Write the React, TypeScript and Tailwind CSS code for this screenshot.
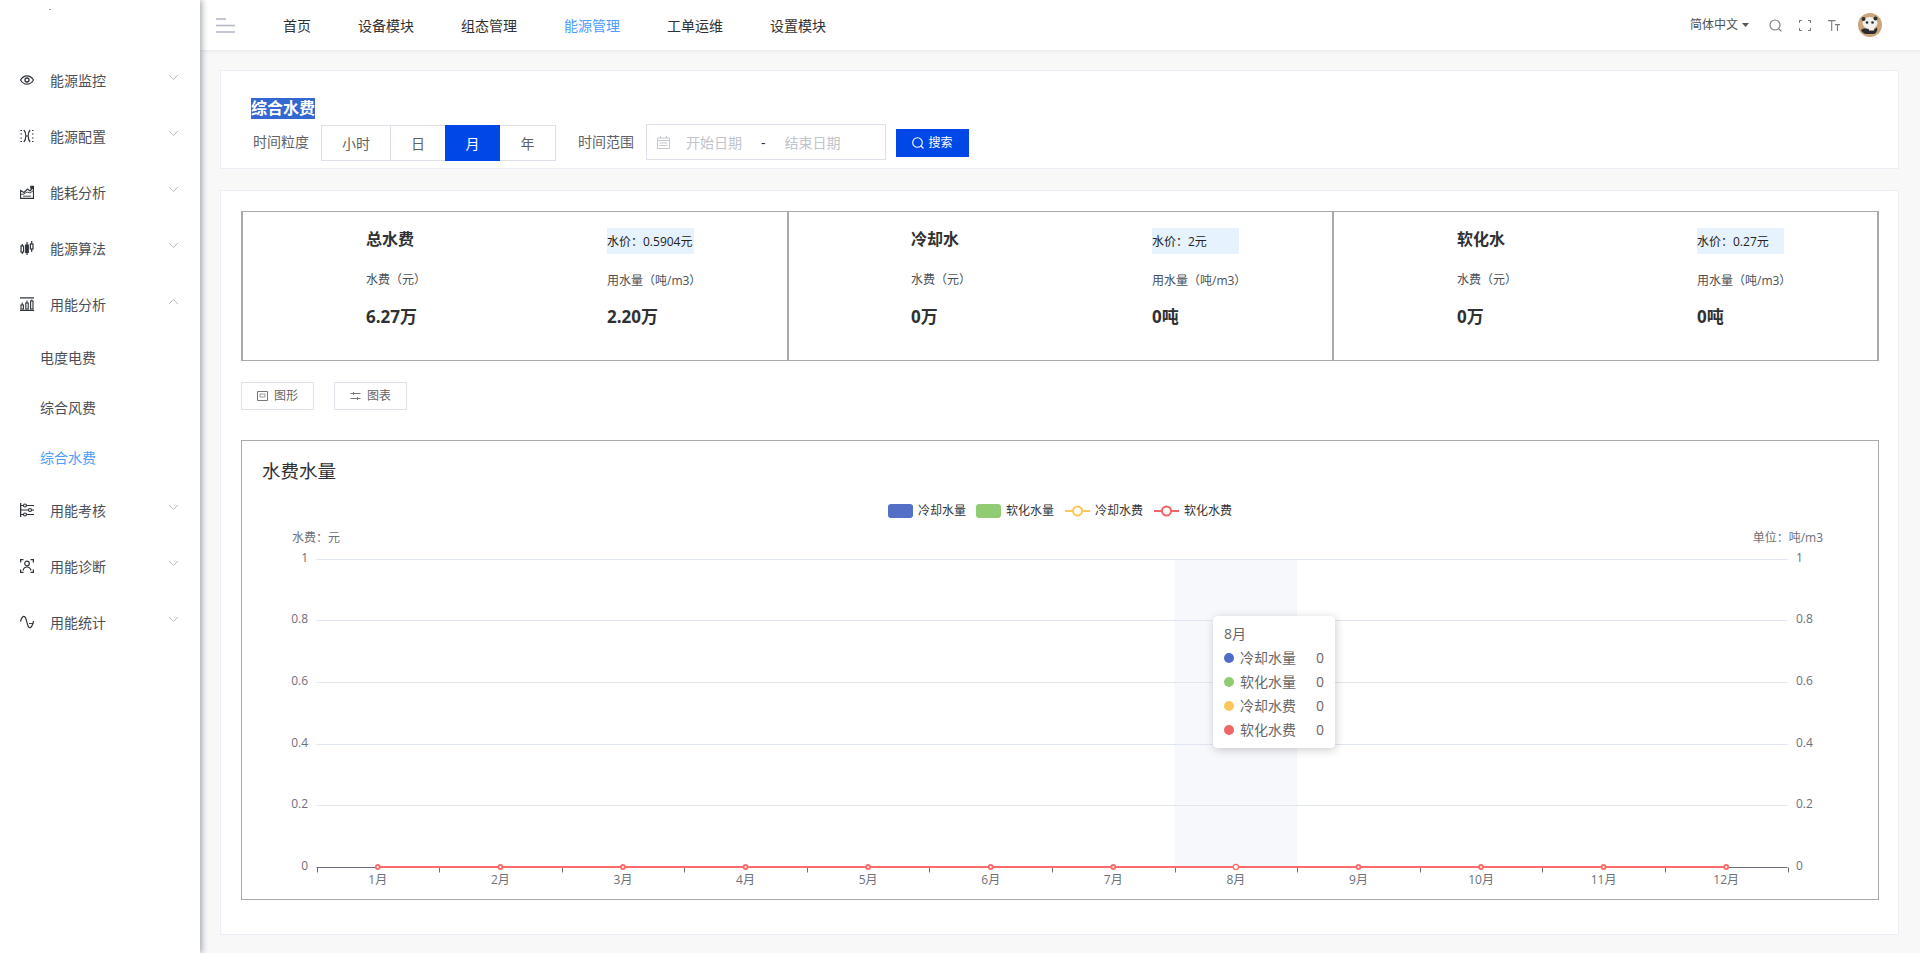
import React from "react";

const menuTop = [
  { t: "能源监控", i: "eye" },
  { t: "能源配置", i: "cfg" },
  { t: "能耗分析", i: "factory" },
  { t: "能源算法", i: "candle" },
];
const menuBottom = [
  { t: "用能考核", i: "sliders" },
  { t: "用能诊断", i: "scan" },
  { t: "用能统计", i: "wave" },
];

function MenuIcon({ name }: { name: string }) {
  const common = { width: 14, height: 14, viewBox: "0 0 14 14", fill: "none", stroke: "#2f343b", strokeWidth: 1.1 };
  switch (name) {
    case "eye":
      return (
        <svg {...common}>
          <path d="M0.5 7C2.2 4.2 4.400 2.800 7 2.800s4.800 1.400 6.500 4.200C11.800 9.800 9.600 11.200 7 11.200S2.200 9.800.5 7z" strokeWidth={1.2} />
          <circle cx="7" cy="7" r="2" strokeWidth={1.3} />
        </svg>
      );
    case "cfg":
      return (
        <svg {...common}>
          <path d="M3.800 1C6.500 3.500 6.500 10.500 3.800 13M10.200 1C7.500 3.500 7.500 10.500 10.200 13M5.500 7h3" strokeWidth={1.2} />
          <path d="M0.500 1.500h1.500M0.500 5h1.500M0.500 9h1.500M0.500 12.500h1.500M12 1.500h1.500M12 5h1.500M12 9h1.500M12 12.500h1.500" strokeWidth={1.2} />
        </svg>
      );
    case "factory":
      return (
        <svg {...common}>
          <path d="M0.500 13.300V5.500L4 7.500 7.500 4l2.500 2 3.500-4v11.300z" strokeWidth={1.2} />
          <path d="M0.500 9.500L4 9l3-2 3 1 3.500-2.500M3 11.200h8" strokeWidth={0.9} />
          <path d="M10.500 1h3v2.500h-3z" fill="#2f343b" strokeWidth={0.6} />
        </svg>
      );
    case "candle":
      return (
        <svg {...common}>
          <rect x="1" y="5" width="2.600" height="6" strokeWidth={1.2} />
          <rect x="5.700" y="4" width="2.600" height="7.500" fill="#2f343b" />
          <rect x="10.400" y="3" width="2.600" height="5" strokeWidth={1.2} />
          <path d="M2.300 3v2M2.300 11v2M7 1v3M7 11.500V14M11.700 0v3M11.700 8v3" strokeWidth={1.2} />
        </svg>
      );
    case "bars":
      return (
        <svg {...common}>
          <path d="M0 .8h14M0 13.400h14" strokeWidth={1.3} />
          <rect x="1" y="8" width="2.400" height="4" strokeWidth={1.1} />
          <rect x="5.800" y="6" width="2.400" height="6" strokeWidth={1.1} />
          <rect x="10.600" y="4" width="2.400" height="8" strokeWidth={1.1} />
          <path d="M2.200 5.500v2.500M7 3.500V6M11.800 2.500V4" />
        </svg>
      );
    case "sliders":
      return (
        <svg {...common}>
          <path d="M0.600 0v14" strokeWidth={1.3} />
          <path d="M1 2.500h13M1 7h13M1 11.500h13" />
          <circle cx="5" cy="2.500" r="1.500" fill="#fff" strokeWidth={1.2} />
          <circle cx="10" cy="7" r="1.500" fill="#fff" strokeWidth={1.2} />
          <circle cx="5" cy="11.500" r="1.500" fill="#fff" strokeWidth={1.2} />
        </svg>
      );
    case "scan":
      return (
        <svg {...common}>
          <path d="M0.600 3.500V.6h2.900M10.500.6h2.900v2.900M13.400 10.500v2.900h-2.900M3.500 13.400H.6v-2.900" strokeWidth={1.3} />
          <circle cx="7" cy="4.500" r="2.300" strokeWidth={1.2} />
          <path d="M3 11.500C3.600 9 5 8 7 8s3.400 1 4 3.500" strokeWidth={1.2} />
        </svg>
      );
    default:
      return (
        <svg {...common}>
          <path d="M0.500 6.500C1.500 2 3.500 0.500 5 2c2 2 1.500 8 4 10.500 1.500 1 3.500-1 4.500-6.500" strokeWidth={1.2} />
          <path d="M9 8.500h4.500" strokeWidth={0.9} />
        </svg>
      );
  }
}

function Chevron({ up }: { up?: boolean }) {
  return (
    <svg width="11" height="7" viewBox="0 0 11 7" fill="none" stroke="#b5b9c2" strokeWidth="1" className="mb-[6px] ml-auto mr-[21px]">
      <path d={up ? "M1 6l4.500-4.500L10 6" : "M1 1l4.500 4.500L10 1"} />
    </svg>
  );
}

function MenuRow({ t, i, up }: { t: string; i: string; up?: boolean }) {
  return (
    <div className="flex h-[56px] items-center pl-[20px] text-[14px] text-[#4a4f57]">
      <span className="mb-[1px] flex h-[14px] w-[14px]">
        <MenuIcon name={i} />
      </span>
      <span className="ml-[16px]">{t}</span>
      <Chevron up={up} />
    </div>
  );
}

function Sidebar() {
  return (
    <aside className="relative z-20 h-full w-[200px] shrink-0 bg-white shadow-[2px_0_6px_rgba(0,21,41,0.35)]">
      <div className="h-[52px] pl-[49px] pt-[9px]">
        <div className="h-[1px] w-[2px] bg-[#8fa3b8]" />
      </div>
      {menuTop.map((m) => (
        <MenuRow key={m.t} t={m.t} i={m.i} />
      ))}
      <MenuRow t="用能分析" i="bars" up />
      {["电度电费", "综合风费", "综合水费"].map((s, n) => (
        <div key={s} className={`flex h-[50px] items-center pl-[40px] text-[14px] ${n === 2 ? "text-[#4c9dff]" : "text-[#4a4f57]"}`}>
          {s}
        </div>
      ))}
      {menuBottom.map((m) => (
        <MenuRow key={m.t} t={m.t} i={m.i} />
      ))}
    </aside>
  );
}

function Header() {
  const nav = ["首页", "设备模块", "组态管理", "能源管理", "工单运维", "设置模块"];
  return (
    <header className="relative z-10 flex h-[50px] shrink-0 items-center bg-white pl-[16px] pr-[38px] shadow-[0_1px_4px_rgba(0,21,41,0.08)]">
      <svg width="19" height="15" viewBox="0 0 19 15" fill="none" stroke="#b3b7c6" strokeWidth="1.4" className="mt-[1px]">
        <path d="M0 1h10M0 7.500h19M0 14h19" />
      </svg>
      <nav className="ml-[48px] flex gap-[47px] text-[14px] text-[#303133]">
        {nav.map((n) => (
          <span key={n} className={n === "能源管理" ? "text-[#4c9dff]" : ""}>
            {n}
          </span>
        ))}
      </nav>
      <div className="ml-auto flex items-center text-[12px] text-[#4a4f57]">
        <span>简体中文</span>
        <svg width="7" height="4" viewBox="0 0 7 4" className="ml-[4px]">
          <path d="M0 0h7L3.500 4z" fill="#50555e" />
        </svg>
        <svg width="13" height="13" viewBox="0 0 13 13" fill="none" stroke="#777b84" strokeWidth="1.1" className="ml-[20px]">
          <circle cx="6" cy="6" r="5" />
          <path d="M10 10l2.400 2.400" />
        </svg>
        <svg width="12" height="11" viewBox="0 0 12 11" fill="none" stroke="#777b84" strokeWidth="1.1" className="ml-[17px]">
          <path d="M0.500 3V.5H3M9 .5h2.500V3M11.500 8v2.500H9M3 10.500H.5V8" />
        </svg>
        <svg width="12" height="11" viewBox="0 0 12 11" fill="none" stroke="#777b84" strokeWidth="1.1" className="ml-[17px]">
          <path d="M0 .6h7.500M3.700 .6V11M7 4.600h5M9.500 4.600V11" />
        </svg>
        <svg width="24" height="24" viewBox="0 0 24 24" className="ml-[18px]">
          <circle cx="12" cy="12" r="12" fill="#c9a67c" />
          <ellipse cx="12" cy="10" rx="7.500" ry="6" fill="#f2f1ee" />
          <circle cx="5.500" cy="6" r="2" fill="#2b2b30" />
          <circle cx="17.500" cy="5.500" r="2" fill="#2b2b30" />
          <circle cx="9" cy="9.500" r="1.300" fill="#2b2b30" />
          <circle cx="14.500" cy="9.500" r="1.300" fill="#2b2b30" />
          <path d="M3 17c3-2.500 5.500-1.500 8-.5s5.500.5 8-2c1 2.500-.5 5.500-3 6.500H8c-2.500-.5-4-2-5-4z" fill="#2b2b30" />
          <path d="M11 14.500h5v3h-5z" fill="#f2f1ee" />
        </svg>
      </div>
    </header>
  );
}

function FilterCard() {
  const seg = [
    { t: "小时", w: "w-[68px]" },
    { t: "日", w: "w-[55px]" },
    { t: "月", w: "w-[55px]", on: true },
    { t: "年", w: "w-[55px]" },
  ];
  return (
    <section className="h-[99px] border border-[#eceef5] bg-white pl-[30px] pt-[25px]">
      <div className="h-[21px]">
        <span className="inline-block h-[21px] bg-[#3367d1] text-[16px] font-bold leading-[21px] text-white">综合水费</span>
      </div>
      <div className="mt-[7px] flex items-start">
        <span className="ml-[2px] mt-[6px] text-[14px] leading-[24px] text-[#606266]">时间粒度</span>
        <div className="ml-[12px] mt-[1px] flex h-[36px] border border-[#dfe1ea] text-[14px] text-[#606266]">
          {seg.map((s, n) => (
            <span
              key={s.t}
              className={`flex items-center justify-center ${s.w} ${n === 1 ? "border-l border-[#dfe1ea]" : ""} ${
                s.on ? "-my-[1px] bg-[#0047e8] text-white" : ""
              }`}
            >
              {s.t}
            </span>
          ))}
        </div>
        <span className="ml-[22px] mt-[6px] text-[14px] leading-[24px] text-[#606266]">时间范围</span>
        <div className="ml-[12px] flex h-[36px] w-[240px] items-center border border-[#dfe1ea] text-[14px] text-[#c0c4cc]">
          <svg width="13" height="13" viewBox="0 0 13 13" fill="none" stroke="#c5c8d0" strokeWidth="1" className="ml-[10px]">
            <path d="M.5 2h12v10.500H.5zM3.500 0v2M9.500 0v2M.5 4.500h12M2.500 7h8M2.500 9.500h8" />
          </svg>
          <span className="ml-[16px]">开始日期</span>
          <span className="ml-[19px] text-[#303133]">-</span>
          <span className="ml-[19px]">结束日期</span>
        </div>
        <button className="ml-[10px] mt-[5px] flex h-[28px] w-[73px] items-center justify-center gap-[4px] bg-[#0047e8] text-[12px] text-white">
          <svg width="12" height="12" viewBox="0 0 12 12" fill="none" stroke="#fff" strokeWidth="1.1">
            <circle cx="5.500" cy="5.500" r="4.800" />
            <path d="M9 9l2.500 2.500" />
          </svg>
          搜索
        </button>
      </div>
    </section>
  );
}

function StatCell({ title, price, v1, v2, first, last }: { title: string; price: string; v1: string; v2: string; first?: boolean; last?: boolean }) {
  return (
    <div
      className={`flex pt-[15px] text-[#303133] ${
        first ? "w-[544px] pl-[123px]" : last ? "w-[545px] border-l-2 border-[#a9a9a9] pl-[123px]" : "w-[545px] border-l-2 border-[#a9a9a9] pl-[122px]"
      }`}
    >
      <div className={last ? "w-[240px]" : "w-[241px]"}>
        <div className="h-[24px] text-[16px] font-bold leading-[24px]">{title}</div>
        <div className="mt-[19px] h-[20px] text-[12px] leading-[20px] text-[#4a4f57]">水费（元）</div>
        <div className="mt-[15px] h-[24px] text-[17px] font-bold leading-[24px]">{v1}</div>
      </div>
      <div>
        <div className="mt-[1px] h-[26px] w-[87px] whitespace-nowrap bg-[#e6f3ff] text-[12px] leading-[27px] text-[#222]">{price}</div>
        <div className="mt-[17px] h-[20px] whitespace-nowrap text-[12px] leading-[20px] text-[#4a4f57]">用水量（吨/m3）</div>
        <div className="mt-[14px] h-[24px] text-[17px] font-bold leading-[24px]">{v2}</div>
      </div>
    </div>
  );
}

function Chart() {
  const L = 316.5;
  const R = 1787.5;
  const step = (R - L) / 12;
  const ys = [559.5, 620.5, 682.5, 744.5, 805.5];
  const labels = ["1", "0.8", "0.6", "0.4", "0.2"];
  const base = 867.5;
  const months = Array.from({ length: 12 }, (_, i) => i);
  const fill = "#6e7079";
  return (
    <svg width="1636" height="416" viewBox="242 483 1636 416" className="block font-['Open_Sans','Noto_Sans_CJK_SC',sans-serif]">
      <rect x={L + step * 7} y="559" width={step} height="308" fill="#f6f8fc" />
      {ys.map((y, i) => (
        <g key={y}>
          <path d={`M${L} ${y}H${R}`} stroke="#e0e6f1" />
          <text x="308" y={y - 2} textAnchor="end" dominantBaseline="central" fontSize="12" fill={fill}>
            {labels[i]}
          </text>
          <text x="1796" y={y - 2} dominantBaseline="central" fontSize="12" fill={fill}>
            {labels[i]}
          </text>
        </g>
      ))}
      <text x="308" y="865.500" textAnchor="end" dominantBaseline="central" fontSize="12" fill={fill}>
        0
      </text>
      <text x="1796" y="865.500" dominantBaseline="central" fontSize="12" fill={fill}>
        0
      </text>
      <text x="292" y="537" dominantBaseline="central" fontSize="12" fill={fill}>
        水费：元
      </text>
      <text x="1823" y="537" textAnchor="end" dominantBaseline="central" fontSize="12" fill={fill}>
        单位：吨/m3
      </text>

      <path d={`M${L} ${base}H${R}`} stroke="#6e7079" />
      {Array.from({ length: 13 }, (_, i) => (
        <path key={i} d={`M${Math.round(L + step * i) + 0.5} ${base}v5`} stroke="#6e7079" />
      ))}
      {months.map((m) => (
        <text key={m} x={L + step * (m + 0.5)} y="879" textAnchor="middle" dominantBaseline="central" fontSize="12" fill={fill}>
          {m + 1}月
        </text>
      ))}
      <path d={`M${L + step / 2} 867H${R - step / 2}`} stroke="#ff6b6b" strokeWidth="2" />
      {months.map((m) => (
        <circle key={m} cx={L + step * (m + 0.5)} cy="867" r={m === 7 ? 2.6 : 2} fill="#fff" stroke="#ff6b6b" strokeWidth={m === 7 ? 1.3 : 1.8} />
      ))}

      <rect x="888" y="504" width="25" height="14" rx="3" fill="#5470c6" />
      <text x="918" y="510" dominantBaseline="central" fontSize="12" fill="#333">
        冷却水量
      </text>
      <rect x="976" y="504" width="25" height="14" rx="3" fill="#91cc75" />
      <text x="1006" y="510" dominantBaseline="central" fontSize="12" fill="#333">
        软化水量
      </text>
      <path d="M1065 511h25" stroke="#fcc75a" strokeWidth="2" />
      <circle cx="1077.500" cy="511" r="4.500" fill="#fff" stroke="#fcc75a" strokeWidth="2" />
      <text x="1095" y="510" dominantBaseline="central" fontSize="12" fill="#333">
        冷却水费
      </text>
      <path d="M1154 511h25" stroke="#f06565" strokeWidth="2" />
      <circle cx="1166.500" cy="511" r="4.500" fill="#fff" stroke="#f06565" strokeWidth="2" />
      <text x="1184" y="510" dominantBaseline="central" fontSize="12" fill="#333">
        软化水费
      </text>
    </svg>
  );
}

function Tooltip() {
  const rows = [
    { t: "冷却水量", c: "bg-[#4f6dc8]" },
    { t: "软化水量", c: "bg-[#91cc75]" },
    { t: "冷却水费", c: "bg-[#fcc75a]" },
    { t: "软化水费", c: "bg-[#f06565]" },
  ];
  return (
    <div className="absolute left-[971px] top-[175px] h-[132px] w-[122px] rounded-[4px] border border-white bg-white p-[10px] text-[14px] leading-[14px] text-[#666] shadow-[1px_2px_10px_rgba(0,0,0,0.2)]">
      <div>8月</div>
      {rows.map((r) => (
        <div key={r.t} className="mt-[10px] flex items-center">
          <span className={`h-[10px] w-[10px] rounded-full ${r.c}`} />
          <span className="ml-[6px]">{r.t}</span>
          <span className="ml-auto">0</span>
        </div>
      ))}
    </div>
  );
}

function ToolButton({ label, kind }: { label: string; kind: string }) {
  return (
    <button className="flex h-[28px] w-[73px] items-center justify-center gap-[6px] border border-[#e0e2ea] text-[12px] text-[#666]">
      {kind === "a" ? (
        <svg width="11" height="10" viewBox="0 0 11 10" fill="none" stroke="#777" strokeWidth="1">
          <path d="M.5.5h10v9H.5z" />
          <path d="M3 3h5v3H3z" strokeWidth="0.7" />
        </svg>
      ) : (
        <svg width="11" height="10" viewBox="0 0 11 10" fill="none" stroke="#777" strokeWidth="1">
          <path d="M.5 2.500h10M.5 7.500h10M3.500 1v3M7.500 6v3" />
        </svg>
      )}
      {label}
    </button>
  );
}

export default function App() {
  return (
    <div className="flex h-[953px] w-full overflow-hidden bg-white font-['Open_Sans','Noto_Sans_CJK_SC',sans-serif]">
      <Sidebar />
      <main className="flex min-w-0 flex-1 flex-col bg-[#f8f8f9]">
        <Header />
        <div className="flex flex-1 flex-col pl-[20px] pr-[21px] pt-[20px]">
          <FilterCard />
          <section className="mt-[21px] h-[745px] border border-[#eceef5] bg-white p-[20px]">
            <div className="flex h-[150px] w-[1638px] border-x-2 border-y border-[#a9a9a9]">
              <StatCell first title="总水费" price="水价：0.5904元" v1="6.27万" v2="2.20万" />
              <StatCell title="冷却水" price="水价：2元" v1="0万" v2="0吨" />
              <StatCell last title="软化水" price="水价：0.27元" v1="0万" v2="0吨" />
            </div>
            <div className="mt-[21px] flex gap-[20px]">
              <ToolButton label="图形" kind="a" />
              <ToolButton label="图表" kind="b" />
            </div>
            <div className="relative mt-[30px] h-[460px] w-[1638px] border border-[#a9a9a9]">
              <h2 className="ml-[20px] mt-[17px] h-[25px] text-[18.500px] font-normal leading-[25px] text-[#303133]">水费水量</h2>
              <Chart />
              <Tooltip />
            </div>
          </section>
        </div>
      </main>
    </div>
  );
}
